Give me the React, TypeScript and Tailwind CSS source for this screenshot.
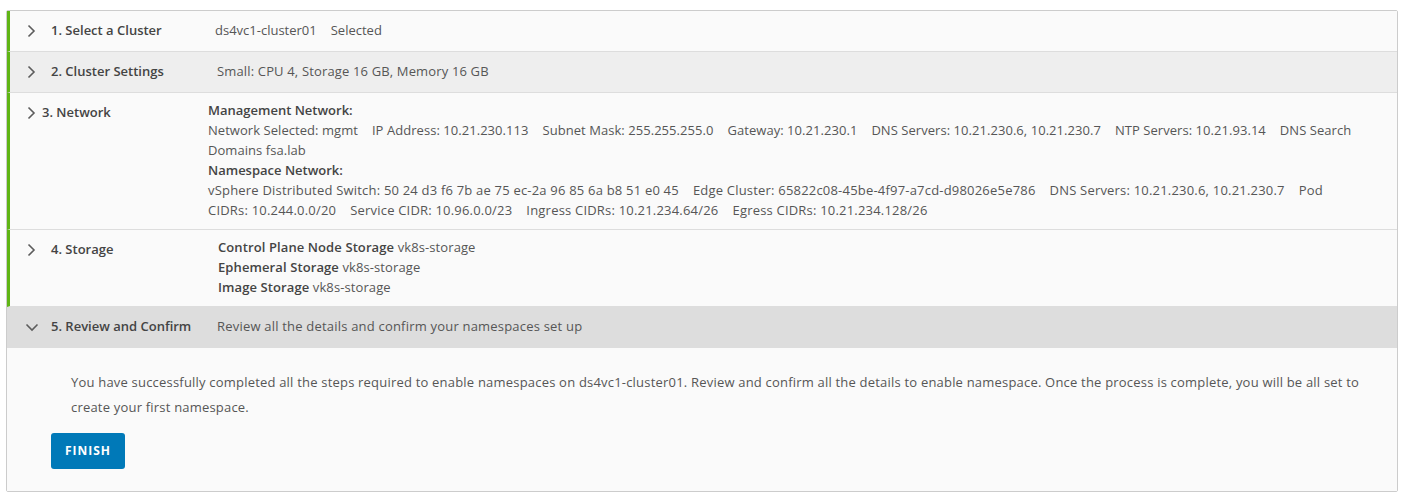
import React from "react";

const Chevron = ({ down = false }: { down?: boolean }) =>
  down ? (
    <svg width="14" height="9" viewBox="0 0 14 9" className="block">
      <path d="M1.5 1.5 L7 7 L12.5 1.5" fill="none" stroke="#5c5c5c" strokeWidth="1.6" />
    </svg>
  ) : (
    <svg width="9" height="14" viewBox="0 0 9 14" className="block">
      <path d="M1.5 1.5 L7 7 L1.5 12.5" fill="none" stroke="#5c5c5c" strokeWidth="1.6" />
    </svg>
  );

const Item = ({ children }: { children: React.ReactNode }) => (
  <span className="mr-[14px]">{children}</span>
);

export default function App() {
  return (
    <div
      className="bg-white w-[1408px] h-[502px] pt-[10px] pl-[6px] pr-[10px]"
      style={{ fontFamily: '"Open Sans", "Liberation Sans", sans-serif' }}
    >
      <div className="border border-[#cccccc] rounded-[2px] text-[13px] text-[#565656]">
        {/* Row 1 */}
        <div className="flex h-[41px] items-center border-l-[3px] border-l-[#60b515] border-b border-b-[#dddddd] bg-[#fafafa]">
          <div className="pl-[17px] w-[41px]"><Chevron /></div>
          <div className="w-[164px] font-semibold text-[#444]">1. Select a Cluster</div>
          <div>
            <Item>ds4vc1-cluster01</Item>
            <span>Selected</span>
          </div>
        </div>
        {/* Row 2 */}
        <div className="flex h-[41px] items-center border-l-[3px] border-l-[#60b515] border-b border-b-[#dddddd] bg-[#eeeeee]">
          <div className="pl-[17px] w-[41px]"><Chevron /></div>
          <div className="w-[166px] font-semibold text-[#444]">2. Cluster Settings</div>
          <div className="tracking-[0.15px]">Small: CPU 4, Storage 16 GB, Memory 16 GB</div>
        </div>
        {/* Row 3 */}
        <div className="flex items-start border-l-[3px] border-l-[#60b515] border-b border-b-[#dddddd] bg-[#fafafa] pt-[7px] pb-[9px] leading-[20px]">
          <div className="pl-[17px] w-[32px] pt-[6px]"><Chevron /></div>
          <div className="w-[166px] font-semibold text-[#444] pt-[2px]">3. Network</div>
          <div className="flex-1 pr-[4px]">
            <div className="font-semibold text-[#444]">Management Network:</div>
            <div className="tracking-[0.05px]">
              <Item>Network Selected: mgmt</Item>
              <Item>IP Address: 10.21.230.113</Item>
              <Item>Subnet Mask: 255.255.255.0</Item>
              <Item>Gateway: 10.21.230.1</Item>
              <Item>DNS Servers: 10.21.230.6, 10.21.230.7</Item>
              <Item>NTP Servers: 10.21.93.14</Item>
              <span>DNS Search<br />Domains fsa.lab</span>
            </div>
            <div className="font-semibold text-[#444]">Namespace Network:</div>
            <div className="tracking-[0.2px]">
              <Item>vSphere Distributed Switch: 50 24 d3 f6 7b ae 75 ec-2a 96 85 6a b8 51 e0 45</Item>
              <Item>Edge Cluster: 65822c08-45be-4f97-a7cd-d98026e5e786</Item>
              <Item>DNS Servers: 10.21.230.6, 10.21.230.7</Item>
              <span>Pod<br />CIDRs: 10.244.0.0/20</span>
              <span className="ml-[14px]"></span>
              <Item>Service CIDR: 10.96.0.0/23</Item>
              <Item>Ingress CIDRs: 10.21.234.64/26</Item>
              <span>Egress CIDRs: 10.21.234.128/26</span>
            </div>
          </div>
        </div>
        {/* Row 4 */}
        <div className="flex items-start border-l-[3px] border-l-[#60b515] border-b border-b-[#dddddd] bg-[#fafafa] pt-[7px] pb-[9px] leading-[20px]">
          <div className="pl-[17px] w-[41px] pt-[6px]"><Chevron /></div>
          <div className="w-[167px] font-semibold text-[#444] pt-[2px]">4. Storage</div>
          <div className="flex-1 tracking-[0.1px]">
            <div><span className="font-semibold text-[#444]">Control Plane Node Storage</span> vk8s-storage</div>
            <div><span className="font-semibold text-[#444]">Ephemeral Storage</span> vk8s-storage</div>
            <div><span className="font-semibold text-[#444]">Image Storage</span> vk8s-storage</div>
          </div>
        </div>
        {/* Row 5 */}
        <div className="flex h-[41px] items-center border-b border-b-[#dddddd] bg-[#dddddd]">
          <div className="pl-[18px] w-[44px]"><Chevron down /></div>
          <div className="w-[166px] font-semibold text-[#444]">5. Review and Confirm</div>
          <div className="tracking-[0.2px]">Review all the details and confirm your namespaces set up</div>
        </div>
        {/* Body */}
        <div className="bg-[#fafafa] pt-[22px] pb-[22px] pl-[44px] pr-[8px]">
          <p className="pl-[20px] leading-[25px] tracking-[0.2px]">
            You have successfully completed all the steps required to enable namespaces on ds4vc1-cluster01. Review and confirm all the details to enable namespace. Once the process is complete, you will be all set to
            <br />
            create your first namespace.
          </p>
          <button className="mt-[13px] h-[36px] w-[74px] rounded-[3px] bg-[#0079b8] text-white text-[12px] font-bold tracking-[1px]">
            FINISH
          </button>
        </div>
      </div>
    </div>
  );
}
